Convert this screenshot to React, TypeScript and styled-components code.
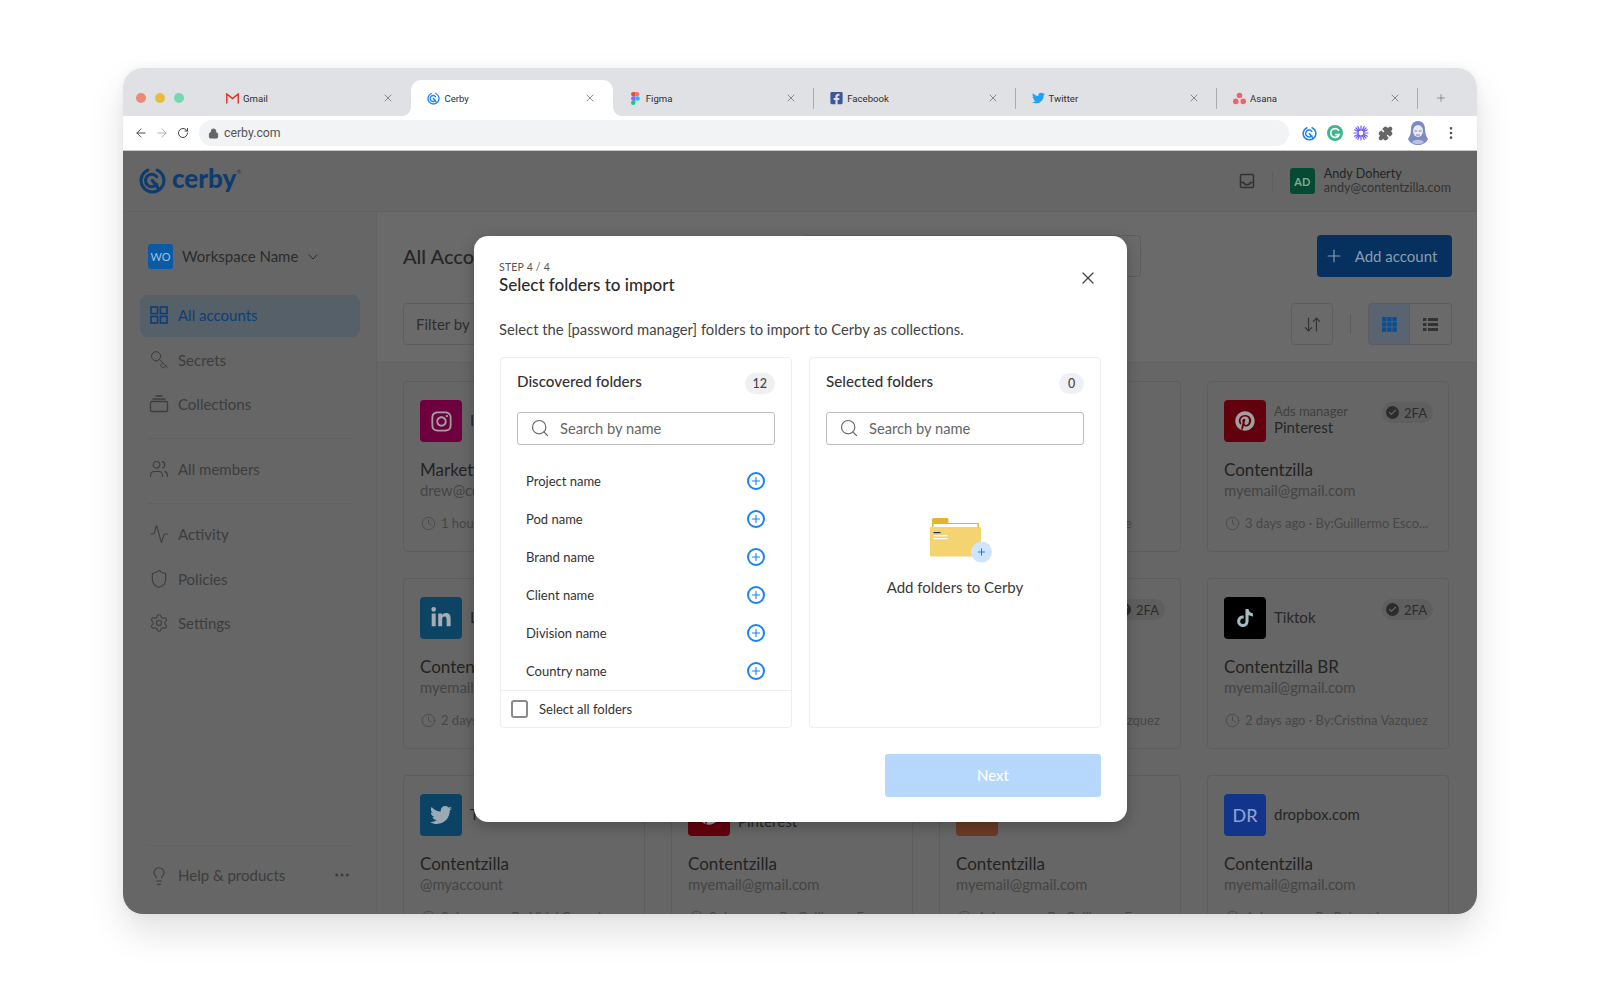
import * as React from 'react';
import styled, { createGlobalStyle } from 'styled-components';
import {
  ArrowDownUp, ArrowLeft, ArrowRight, Activity, Check, ChevronDown, Clock, EllipsisVertical,
  Key, Lightbulb, Lock, MoreHorizontal, Plus, Puzzle, RotateCw, Search, Settings, Shield, Users, X,
} from 'lucide-react';
import { FaFacebookSquare, FaInstagram, FaLinkedinIn, FaPinterest, FaTiktok, FaTwitter } from 'react-icons/fa';

const Global = createGlobalStyle`
  html, body { margin: 0; padding: 0; background: #fff; }
  body { font-family: Lato, "Open Sans", Arial, sans-serif; overflow: hidden; }
  * { box-sizing: border-box; }
`;

const Page = styled.div`
  width: 1600px;
  height: 982px;
  padding: 68px 123px;
  background: #fff;
`;

const Win = styled.div`
  width: 1354px;
  height: 846px;
  border-radius: 20px;
  overflow: hidden;
  display: flex;
  flex-direction: column;
  box-shadow: 0 18px 36px rgba(0, 0, 0, 0.12), 0 0 10px rgba(0, 0, 0, 0.05);
`;

/* browser chrome */
const TabStrip = styled.div`
  height: 48px;
  flex: none;
  background: #dfe1e5;
  display: flex;
  align-items: flex-end;
`;
const Lights = styled.div`
  width: 87px;
  height: 36px;
  padding-left: 12.500px;
  display: flex;
  align-items: center;
  gap: 9px;
`;
const Light = styled.span<{ $c: string }>`
  width: 10px;
  height: 10px;
  border-radius: 50%;
  background: ${p => p.$c};
`;
const Tab = styled.div<{ $active?: boolean; $sep?: boolean }>`
  position: relative;
  width: 201.4px;
  height: 36px;
  padding: 0 16px;
  display: flex;
  align-items: center;
  gap: 4px;
  border-radius: 10px 10px 0 0;
  background: ${p => (p.$active ? '#fff' : 'transparent')};
  color: #2f2f2f;
  font-size: 9.600px;
  font-family: Roboto, sans-serif;
  font-weight: 400;
  ${p => p.$active && `
    &::before, &::after {
      content: '';
      position: absolute;
      bottom: 0;
      width: 10px;
      height: 10px;
    }
    &::before { left: -10px; background: radial-gradient(circle at 0 0, transparent 10px, #fff 10.5px); }
    &::after { right: -10px; background: radial-gradient(circle at 100% 0, transparent 10px, #fff 10.5px); }
  `}
  ${p => p.$sep && `
    &::after {
      content: '';
      position: absolute;
      right: 0;
      top: 8px;
      height: 21px;
      border-right: 1px solid #a9abaf;
    }
  `}
`;
const TabIcon = styled.span`
  width: 13px;
  height: 13px;
  flex: none;
  display: flex;
  align-items: center;
  justify-content: center;
`;
const TabClose = styled.span`
  margin-left: auto;
  margin-right: 1px;
  display: flex;
  color: #555;
`;
const NewTab = styled.div`
  height: 36px;
  width: 46px;
  display: flex;
  align-items: center;
  justify-content: center;
  color: #777;
`;

const Toolbar = styled.div`
  height: 35px;
  flex: none;
  background: #fff;
  border-bottom: 1px solid #c9c9c9;
  display: flex;
  align-items: center;
  padding-left: 11px;
`;
const NavArrows = styled.div`
  width: 65px;
  display: flex;
  gap: 7px;
  color: #444;
`;
const Address = styled.div`
  width: 1090px;
  height: 26px;
  border-radius: 13px;
  background: #f1f3f4;
  display: flex;
  align-items: center;
  gap: 5px;
  padding-left: 9px;
  color: #555;
  font-size: 12.300px;
  font-family: Roboto, sans-serif;
`;
const Extensions = styled.div`
  margin-left: 7px;
  display: grid;
  grid-template-columns: 26px 26px 26px 22px 44px 22px;
  justify-items: center;
  align-items: center;
`;

/* app behind the dialog, painted in its dimmed colours */
const AppArea = styled.div`
  position: relative;
  flex: 1;
  min-height: 0;
  background: #666;
  display: flex;
  flex-direction: column;
  color: #2c2c2c;
`;
const AppHeader = styled.header`
  height: 61px;
  flex: none;
  border-bottom: 1px solid #616161;
  display: flex;
  align-items: center;
  padding: 0 26px 0 16px;
`;
const Logo = styled.div`
  display: flex;
  align-items: center;
  gap: 6px;
  margin-top: -2px;
`;
const LogoWord = styled.span`
  color: #0f3c6c;
  font-size: 26px;
  font-weight: 900;
  line-height: 28px;
  margin-top: -4px;
  position: relative;
  &::after {
    content: '®';
    position: absolute;
    top: 4px;
    right: -5px;
    font-size: 6px;
    font-weight: 400;
    line-height: 8px;
  }
`;
const HeaderRight = styled.div`
  margin-left: auto;
  display: flex;
  align-items: center;
  color: #333;
`;
const HeaderDivider = styled.span`
  width: 1px;
  height: 20px;
  background: #5e5e5e;
  margin: 0 17px 0 17px;
`;
const UserBadge = styled.div`
  width: 25px;
  height: 26px;
  border-radius: 3px;
  background: #064a33;
  color: #87a798;
  font-size: 11px;
  font-weight: 700;
  display: flex;
  align-items: center;
  justify-content: center;
  margin-right: 9px;
`;
const UserName = styled.div`
  font-size: 12.600px;
  line-height: 14px;
  color: #242424;
`;
const UserMail = styled.div`
  font-size: 12.600px;
  line-height: 14px;
  color: #333;
`;

const Body = styled.div`
  flex: 1;
  min-height: 0;
  display: flex;
`;
const Sidebar = styled.aside`
  width: 254px;
  flex: none;
  border-right: 1px solid #616161;
  padding-top: 32px;
  display: flex;
  flex-direction: column;
`;
const Workspace = styled.div`
  display: flex;
  align-items: center;
  margin: 0 25px 26px;
  height: 25px;
  font-size: 15px;
  line-height: 23px;
  color: #2c2c2c;
`;
const WorkspaceBadge = styled.span`
  width: 25px;
  height: 25px;
  border-radius: 3px;
  background: #0a5aa6;
  color: #9cc0e0;
  font-size: 11px;
  display: flex;
  align-items: center;
  justify-content: center;
  margin-right: 9px;
`;
const NavRow = styled.div<{ $active?: boolean }>`
  height: 42px;
  margin: 0 17px 2.5px;
  width: 220px;
  padding: 0 0 2px 9px;
  border-radius: 8px;
  display: flex;
  align-items: center;
  gap: 9px;
  font-size: 15px;
  background: ${p => (p.$active ? '#566069' : 'transparent')};
  color: ${p => (p.$active ? '#0d3f74' : '#3d3d3d')};
`;
const NavRule = styled.div`
  height: 1px;
  background: #616161;
  margin: 9px 25px 10.500px;
`;
const SideFoot = styled.div`
  margin: auto 25px 0;
  height: 69px;
  border-top: 1px solid #616161;
  padding: 20px 0 0 1px;
  display: flex;
  align-items: flex-start;
  gap: 9px;
  font-size: 15px;
  color: #3d3d3d;
`;
const FootMore = styled.span`
  margin-left: auto;
  display: flex;
`;
const Flip = styled.span`
  display: flex;
  transform: rotate(90deg);
`;

const Main = styled.main`
  flex: 1;
  min-width: 0;
  display: flex;
  flex-direction: column;
  overflow: hidden;
`;
const MainTop = styled.div`
  flex: none;
  background: #6a6a6a;
  border-bottom: 1px solid #616161;
  padding: 23px 25px 17px 26px;
`;
const TitleRow = styled.div`
  display: grid;
  grid-template-columns: 400px 338px 1fr;
  height: 42px;
  align-items: center;
  margin-bottom: 26px;
`;
const PageTitle = styled.h1`
  margin: 0;
  font-size: 20px;
  font-weight: 500;
  color: #262626;
`;
const BoxShape = styled.div`
  height: 42px;
  border: 1px solid #5d5d5d;
  border-radius: 4px;
`;
const AddButton = styled.button`
  justify-self: end;
  width: 135px;
  height: 42px;
  border: 0;
  padding: 0 8px 0 0;
  border-radius: 4px;
  background: #06315f;
  color: #8a9db0;
  font: 15px Lato, sans-serif;
  display: flex;
  align-items: center;
  justify-content: center;
  gap: 11px;
`;
const FilterRow = styled.div`
  height: 42px;
  display: flex;
  align-items: center;
`;
const FilterBox = styled(BoxShape)`
  width: 400px;
  padding: 0 12px;
  line-height: 40px;
  font-size: 15px;
  color: #2f2f2f;
`;
const IconBtn = styled.div<{ $on?: boolean; $side?: string }>`
  width: 42px;
  height: 42px;
  border: 1px solid #5d5d5d;
  border-radius: ${p => (p.$side === 'left' ? '4px 0 0 4px' : p.$side === 'right' ? '0 4px 4px 0' : '4px')};
  ${p => p.$side === 'right' && 'border-left: 0;'}
  background: ${p => (p.$on ? '#5a6470' : 'transparent')};
  display: flex;
  align-items: center;
  justify-content: center;
  color: #333;
`;
const RightTools = styled.div`
  margin-left: auto;
  display: flex;
  align-items: center;
`;
const ToolRule = styled.span`
  width: 1px;
  height: 20px;
  background: #5d5d5d;
  margin: 0 17px 0 17px;
`;

const CardGrid = styled.div`
  flex: 1;
  padding: 18px 0 0 26px;
  display: grid;
  grid-template-columns: repeat(4, 242px);
  grid-auto-rows: 171px;
  column-gap: 26px;
  row-gap: 26px;
`;
const Card = styled.article`
  border: 1px solid #5d5d5d;
  border-radius: 4px;
  padding: 18px 16px 0;
`;
const CardHead = styled.div`
  display: flex;
  align-items: center;
  height: 42px;
`;
const Tile = styled.div<{ $bg: string; $fg: string }>`
  width: 42px;
  height: 42px;
  flex: none;
  border-radius: 4px;
  background: ${p => p.$bg};
  color: ${p => p.$fg};
  display: flex;
  align-items: center;
  justify-content: center;
  font-size: 18px;
  font-weight: 500;
  margin-right: 8px;
`;
const ServiceWrap = styled.div`
  min-width: 0;
  padding-bottom: 2px;
`;
const ServiceKind = styled.div`
  font-size: 13px;
  line-height: 15px;
  color: #404040;
`;
const ServiceName = styled.div`
  font-size: 15px;
  line-height: 17px;
  color: #262626;
`;
const TwoFA = styled.div`
  margin-left: auto;
  margin-top: -17px;
  margin-right: -1px;
  width: 51px;
  height: 21px;
  flex: none;
  border-radius: 11px;
  background: #5f5f5f;
  display: flex;
  align-items: center;
  gap: 5px;
  padding-left: 4px;
  font-size: 13px;
  color: #2c2c2c;
`;
const TwoFADot = styled.span`
  width: 13px;
  height: 13px;
  border-radius: 50%;
  background: #2c2c2c;
  color: #666;
  display: flex;
  align-items: center;
  justify-content: center;
`;
const CardName = styled.div`
  margin-top: 18px;
  font-size: 17px;
  line-height: 20px;
  color: #232323;
  white-space: nowrap;
`;
const CardMail = styled.div`
  font-size: 14.800px;
  line-height: 20px;
  color: #444;
`;
const CardMeta = styled.div`
  margin-top: 13px;
  padding-left: 1px;
  height: 20px;
  display: flex;
  align-items: center;
  gap: 5px;
  font-size: 13px;
  color: #464646;
  white-space: nowrap;
  overflow: hidden;
`;

/* dialog */
const Modal = styled.section`
  position: absolute;
  left: 351px;
  top: 85px;
  width: 653px;
  height: 586px;
  background: #fff;
  border-radius: 14px;
  padding: 24px 26px 25px 25px;
  box-shadow: 0 4px 14px rgba(0, 0, 0, 0.25);
  display: flex;
  flex-direction: column;
  color: #2d2d2d;
`;
const CloseBtn = styled.button`
  position: absolute;
  right: 28px;
  top: 31px;
  width: 22px;
  height: 22px;
  padding: 0;
  border: 0;
  background: none;
  color: #444;
  display: flex;
  align-items: center;
  justify-content: center;
`;
const Step = styled.div`
  font-size: 10.500px;
  line-height: 14px;
  color: #555;
  letter-spacing: 0.2px;
`;
const ModalTitle = styled.h2`
  margin: 1px 0 0;
  font-size: 17px;
  line-height: 20px;
  font-weight: 500;
  color: #2a2a2a;
`;
const Lead = styled.p`
  margin: 24px 0 18px;
  font-size: 14.800px;
  line-height: 20px;
  color: #444;
`;
const Panels = styled.div`
  height: 371px;
  flex: none;
  margin-left: 1px;
  display: grid;
  grid-template-columns: 1fr 1fr;
  gap: 17px;
`;
const Panel = styled.div`
  border: 1px solid #eceef0;
  border-radius: 4px;
  display: flex;
  flex-direction: column;
  min-width: 0;
`;
const PanelHead = styled.div`
  height: 54px;
  padding: 13px 16px 0;
  display: flex;
  align-items: flex-start;
  justify-content: space-between;
  font-size: 15.200px;
  line-height: 20px;
  font-weight: 500;
  color: #333;
`;
const Count = styled.span`
  min-width: 25px;
  height: 21px;
  margin-top: 2px;
  padding: 0 8px;
  border-radius: 11px;
  background: #eef0f3;
  font-size: 12.500px;
  line-height: 21px;
  text-align: center;
  color: #444;
`;
const SearchBox = styled.div`
  height: 33px;
  margin: 0 16px;
  border: 1px solid #bdbdbd;
  border-radius: 3px;
  padding: 0 0 2px 12px;
  display: flex;
  align-items: center;
  gap: 10px;
  color: #666;
  font-size: 14.700px;
`;
const FolderList = styled.div`
  margin-top: 17px;
  flex: 1;
`;
const FolderRow = styled.div`
  height: 38px;
  padding: 0 26px 0 25px;
  display: flex;
  align-items: center;
  justify-content: space-between;
  font-size: 13px;
  color: #333;
`;
const PlusRound = styled.span`
  width: 18px;
  height: 18px;
  border: 2px solid #1a82f5;
  border-radius: 50%;
  color: #1a82f5;
  display: flex;
  align-items: center;
  justify-content: center;
`;
const PanelFoot = styled.label`
  height: 37px;
  flex: none;
  border-top: 1px solid #eceef0;
  padding-left: 10px;
  display: flex;
  align-items: center;
  gap: 11px;
  font-size: 13px;
  color: #333;
`;
const CheckBox = styled.span`
  width: 17px;
  height: 18px;
  border: 2px solid #8a8a8a;
  border-radius: 3px;
`;
const Empty = styled.div`
  margin-top: 73px;
  display: flex;
  flex-direction: column;
  align-items: center;
  gap: 13px;
  font-size: 15px;
  line-height: 20px;
  color: #3a3a3a;
`;
const ModalFoot = styled.div`
  margin-top: 26px;
  display: flex;
  justify-content: flex-end;
`;
const NextBtn = styled.button`
  width: 216px;
  height: 43px;
  border: 0;
  padding: 0 0 2px;
  border-radius: 3px;
  background: #b7d8fd;
  color: #fff;
  font: 15px Lato, sans-serif;
`;

function CerbyMark({ size, color, weight = 2.6 }: { size: number; color: string; weight?: number }) {
  return (
    <svg width={size} height={size} viewBox="0 0 26 26" fill="none" stroke={color} strokeWidth={weight} strokeLinecap="round">
      <path d="M8.5 3a11 11 0 1 0 9 0" />
      <path d="M17 9.3a6 6 0 1 0 0 7.4" />
      <path d="M12.8 13l5.4 7" />
    </svg>
  );
}

function GmailIcon() {
  return (
    <svg width="13" height="11" viewBox="0 0 13 11" fill="none">
      <path d="M.8 10.5V1l5.7 4.6L12.2 1v9.5" stroke="#e8291c" strokeWidth="1.4" />
    </svg>
  );
}

function FigmaIcon() {
  return (
    <svg width="9" height="13" viewBox="0 0 9 13">
      <path d="M0 2.2A2.2 2.2 0 0 1 2.2 0h2.2v4.3H2.2A2.2 2.2 0 0 1 0 2.2z" fill="#f24e1e" />
      <path d="M4.4 0h2.2a2.2 2.2 0 0 1 0 4.3H4.4z" fill="#ff7262" />
      <path d="M0 6.5a2.2 2.2 0 0 1 2.2-2.2h2.2v4.4H2.2A2.2 2.2 0 0 1 0 6.5z" fill="#a259ff" />
      <circle cx="6.6" cy="6.5" r="2.2" fill="#1abcfe" />
      <path d="M0 10.8a2.2 2.2 0 0 1 2.2-2.2h2.2v2.2a2.2 2.2 0 0 1-4.4 0z" fill="#0acf83" />
    </svg>
  );
}

function AsanaIcon() {
  return (
    <svg width="14" height="13" viewBox="0 0 14 13" fill="#f0626a">
      <circle cx="7" cy="3.2" r="3" />
      <circle cx="3" cy="9.6" r="3" />
      <circle cx="11" cy="9.6" r="3" />
    </svg>
  );
}

function SnowIcon() {
  return (
    <svg width="16" height="16" viewBox="0 0 16 16" stroke="#6a5cf5" strokeWidth="1.2" strokeLinecap="round">
      <path d="M8 1v14M1 8h14M3 3l10 10M13 3L3 13M4.8 1.6l6.4 12.8M11.2 1.6L4.8 14.4M1.600 4.800l12.800 6.400M1.600 11.200l12.800-6.400" />
      <circle cx="8" cy="8" r="3" fill="#fff" />
    </svg>
  );
}

function GrammarlyIcon() {
  return (
    <svg width="16" height="16" viewBox="0 0 16 16" fill="none">
      <circle cx="8" cy="8" r="8" fill="#3fb68b" />
      <path d="M11.5 5.2A4.4 4.4 0 1 0 12.2 9.6H8.8" stroke="#fff" strokeWidth="1.6" strokeLinecap="round" />
    </svg>
  );
}

function ProfileIcon() {
  return (
    <svg width="22" height="26" viewBox="0 0 22 26">
      <path d="M11 1c5 0 7 4 7 8 0 4 1 7 3 10-2 4-6 6-10 6S3 23 1 19c2-3 3-6 3-10 0-4 2-8 7-8z" fill="#7d8ac4" />
      <ellipse cx="11" cy="11" rx="5" ry="6" fill="#e8ebf5" />
      <path d="M5 22c3-3 9-3 12 0-3 3-9 3-12 0z" fill="#b9c1e3" />
      <path d="M7.5 11h2.6M11.9 11h2.6M9 15h4" stroke="#555" strokeWidth=".7" />
    </svg>
  );
}

function TrayIcon() {
  return (
    <svg width="16" height="16" viewBox="0 0 16 16" fill="none" stroke="#333" strokeWidth="1.5">
      <rect x="1.500" y="1.500" width="13" height="13" rx="1" />
      <path d="M1.500 9.500h3.300c.4 1.500 1.700 2.300 3.200 2.300s2.800-.8 3.200-2.300h3.300" />
    </svg>
  );
}

function GridNavIcon({ color }: { color: string }) {
  return (
    <svg width="20" height="20" viewBox="0 0 20 20" fill="none" stroke={color} strokeWidth="1.6">
      <rect x="2" y="2" width="6.6" height="6.6" />
      <rect x="11.4" y="2" width="6.6" height="6.6" />
      <rect x="2" y="11.4" width="6.6" height="6.6" />
      <rect x="11.4" y="11.4" width="6.6" height="6.6" />
    </svg>
  );
}

function StackIcon() {
  return (
    <svg width="20" height="20" viewBox="0 0 20 20" fill="none" stroke="#3d3d3d" strokeWidth="1.3">
      <rect x="1.5" y="7.5" width="17" height="10" rx="1" />
      <path d="M3.5 5h13M6.5 2h7" />
    </svg>
  );
}

function DotsGrid() {
  const cells = [0, 1, 2].flatMap(r => [0, 1, 2].map(c => ({ r, c })));
  return (
    <svg width="15" height="15" viewBox="0 0 15 15" fill="#0b4f93">
      {cells.map(({ r, c }) => <rect key={`${r}${c}`} x={c * 5.2} y={r * 5.2} width="4.4" height="4.4" />)}
    </svg>
  );
}

function ListLines() {
  return (
    <svg width="15" height="15" viewBox="0 0 15 15" fill="#333">
      {[1, 6, 11].map(y => (
        <g key={y}>
          <rect x="0" y={y} width="3.4" height="3" />
          <rect x="5" y={y} width="10" height="3" />
        </g>
      ))}
    </svg>
  );
}

function FolderArt() {
  return (
    <svg width="64" height="46" viewBox="0 0 64 46" style={{ marginLeft: 13 }}>
      <path d="M2 1.5A1.5 1.5 0 0 1 3.500 0H17a1.500 1.500 0 0 1 1.500 1.500V5H48a1 1 0 0 1 1 1v8H2z" fill="#e3b52c" />
      <rect x="3.500" y="6" width="44" height="6" fill="#fff" />
      <rect x="0" y="9" width="51" height="29.500" rx="1" fill="#f6d371" />
      <rect x="3.500" y="14" width="7" height="1.200" fill="#1c2a6b" />
      <rect x="3.500" y="17" width="14" height="1.300" fill="#fff" />
      <rect x="3.500" y="20" width="14" height="1.300" fill="#fff" />
      <circle cx="51.500" cy="34" r="10.500" fill="#cfe4fd" />
      <path d="M51.500 30.500v7M48 34h7" stroke="#1a82f5" strokeWidth="1.100" />
    </svg>
  );
}

const tabs = [
  { key: 'Gmail', icon: <GmailIcon /> },
  { key: 'Cerby', icon: <CerbyMark size={13} color="#1a82f5" />, active: true },
  { key: 'Figma', icon: <FigmaIcon />, sep: true },
  { key: 'Facebook', icon: <FaFacebookSquare size={14} color="#3b5998" />, sep: true },
  { key: 'Twitter', icon: <FaTwitter size={14} color="#1da1f2" />, sep: true },
  { key: 'Asana', icon: <AsanaIcon />, sep: true },
];

type Account = {
  tile?: React.ReactNode;
  bg?: string;
  fg?: string;
  kind?: string;
  service?: string;
  name?: string;
  mail?: string;
  meta?: string;
  tfa?: boolean;
};

// col 2 of the first two rows sits wholly under the dialog, so those cards stay empty
const accounts: Account[] = [
  { tile: <FaInstagram size={23} />, bg: '#6e0040', fg: '#a0a0a0', service: 'Instagram', name: 'Marketing', mail: 'drew@contentzilla.com', meta: '1 hour ago · By:Drew' },
  {},
  { meta: '2 days ago · By:Felipe Pepe' },
  { tile: <FaPinterest size={20} />, bg: '#63000d', fg: '#a0a0a0', kind: 'Ads manager', service: 'Pinterest', name: 'Contentzilla', mail: 'myemail@gmail.com', meta: '3 days ago · By:Guillermo Esco...', tfa: true },
  { tile: <FaLinkedinIn size={22} />, bg: '#0e4463', fg: '#a4adb3', service: 'Linkedin', name: 'Contentzilla', mail: 'myemail@gmail.com', meta: '2 days ago' },
  {},
  { meta: '2 days ago · By:Cristina Vazquez', tfa: true },
  { tile: <FaTiktok size={18} />, bg: '#000', fg: '#a3bcc0', service: 'Tiktok', name: 'Contentzilla BR', mail: 'myemail@gmail.com', meta: '2 days ago · By:Cristina Vazquez', tfa: true },
  { tile: <FaTwitter size={22} />, bg: '#0c4263', fg: '#9aa9b3', service: 'Twitter', name: 'Contentzilla', mail: '@myaccount', meta: '2 days ago · By:Vidal Gonzalez' },
  { tile: <FaPinterest size={20} />, bg: '#63000d', fg: '#a0a0a0', kind: 'Ads manager', service: 'Pinterest', name: 'Contentzilla', mail: 'myemail@gmail.com', meta: '2 days ago · By:Guillermo E...' },
  { tile: 'A', bg: '#6b3a26', fg: '#a0a0a0', service: 'Amazon', name: 'Contentzilla', mail: 'myemail@gmail.com', meta: '4 days ago · By:Guillermo E...' },
  { tile: 'DR', bg: '#12348a', fg: '#8d9fcf', service: 'dropbox.com', name: 'Contentzilla', mail: 'myemail@gmail.com', meta: '4 days ago · By:Robert Lee' },
];

const folders = ['Project name', 'Pod name', 'Brand name', 'Client name', 'Division name', 'Country name'];

export default function App() {
  return (
    <Page>
      <Global />
      <Win>
        <TabStrip>
          <Lights>
            <Light $c="#ee8878" />
            <Light $c="#e9bd3c" />
            <Light $c="#76d7b2" />
          </Lights>
          {tabs.map(t => (
            <Tab key={t.key} $active={t.active} $sep={t.sep}>
              <TabIcon>{t.icon}</TabIcon>
              {t.key}
              <TabClose><X size={12} strokeWidth={1.3} /></TabClose>
            </Tab>
          ))}
          <NewTab><Plus size={12} strokeWidth={1.5} /></NewTab>
        </TabStrip>

        <Toolbar>
          <NavArrows>
            <ArrowLeft size={14} strokeWidth={1.6} />
            <ArrowRight size={14} strokeWidth={1.6} color="#aaa" />
            <RotateCw size={12} strokeWidth={2} style={{ marginTop: 1, marginLeft: 1 }} />
          </NavArrows>
          <Address>
            <Lock size={11} fill="#666" color="#666" />
            cerby.com
          </Address>
          <Extensions>
            <CerbyMark size={15} color="#1a82f5" />
            <GrammarlyIcon />
            <SnowIcon />
            <Puzzle size={15} fill="#666" color="#666" />
            <ProfileIcon />
            <EllipsisVertical size={16} color="#555" />
          </Extensions>
        </Toolbar>

        <AppArea>
          <AppHeader>
            <Logo>
              <CerbyMark size={27} color="#0f3c6c" weight={3} />
              <LogoWord>cerby</LogoWord>
            </Logo>
            <HeaderRight>
              <TrayIcon />
              <HeaderDivider />
              <UserBadge>AD</UserBadge>
              <div>
                <UserName>Andy Doherty</UserName>
                <UserMail>andy@contentzilla.com</UserMail>
              </div>
            </HeaderRight>
          </AppHeader>

          <Body>
            <Sidebar>
              <Workspace>
                <WorkspaceBadge>WO</WorkspaceBadge>
                Workspace Name
                <ChevronDown size={16} strokeWidth={1.5} style={{ marginLeft: 7 }} />
              </Workspace>
              <NavRow $active><GridNavIcon color="#0d3f74" />All accounts</NavRow>
              <NavRow><Flip><Key size={20} strokeWidth={1.2} /></Flip>Secrets</NavRow>
              <NavRow><StackIcon />Collections</NavRow>
              <NavRule />
              <NavRow><Users size={20} strokeWidth={1.3} />All members</NavRow>
              <NavRule />
              <NavRow><Activity size={20} strokeWidth={1.3} />Activity</NavRow>
              <NavRow><Shield size={20} strokeWidth={1.3} />Policies</NavRow>
              <NavRow><Settings size={20} strokeWidth={1.3} />Settings</NavRow>
              <SideFoot>
                <Lightbulb size={20} strokeWidth={1.3} />
                Help &amp; products
                <FootMore><MoreHorizontal size={18} /></FootMore>
              </SideFoot>
            </Sidebar>

            <Main>
              <MainTop>
                <TitleRow>
                  <PageTitle>All Accounts</PageTitle>
                  <BoxShape />
                  <AddButton><Plus size={20} strokeWidth={1.4} />Add account</AddButton>
                </TitleRow>
                <FilterRow>
                  <FilterBox>Filter by</FilterBox>
                  <RightTools>
                    <IconBtn><ArrowDownUp size={19} strokeWidth={1.5} /></IconBtn>
                    <ToolRule />
                    <IconBtn $on $side="left"><DotsGrid /></IconBtn>
                    <IconBtn $side="right"><ListLines /></IconBtn>
                  </RightTools>
                </FilterRow>
              </MainTop>
              <CardGrid>
                {accounts.map((a, i) => (
                  <Card key={i}>
                    <CardHead>
                      {a.tile && <Tile $bg={a.bg ?? '#666'} $fg={a.fg ?? '#aaa'}>{a.tile}</Tile>}
                      <ServiceWrap>
                        {a.kind && <ServiceKind>{a.kind}</ServiceKind>}
                        {a.service && <ServiceName>{a.service}</ServiceName>}
                      </ServiceWrap>
                      {a.tfa && (
                        <TwoFA>
                          <TwoFADot><Check size={9} strokeWidth={3} /></TwoFADot>
                          2FA
                        </TwoFA>
                      )}
                    </CardHead>
                    {a.meta && (
                      <>
                        <CardName>{a.name ?? '\u00a0'}</CardName>
                        <CardMail>{a.mail ?? '\u00a0'}</CardMail>
                        <CardMeta><Clock size={15} strokeWidth={1.3} style={{ flex: 'none' }} />{a.meta}</CardMeta>
                      </>
                    )}
                  </Card>
                ))}
              </CardGrid>
            </Main>
          </Body>

          <Modal>
            <CloseBtn aria-label="Close"><X size={20} strokeWidth={1.5} /></CloseBtn>
            <Step>STEP 4 / 4</Step>
            <ModalTitle>Select folders to import</ModalTitle>
            <Lead>Select the [password manager] folders to import to Cerby as collections.</Lead>
            <Panels>
              <Panel>
                <PanelHead>Discovered folders<Count>12</Count></PanelHead>
                <SearchBox><Search size={20} strokeWidth={1.4} />Search by name</SearchBox>
                <FolderList>
                  {folders.map(f => (
                    <FolderRow key={f}>
                      {f}
                      <PlusRound><Plus size={12} strokeWidth={2.2} /></PlusRound>
                    </FolderRow>
                  ))}
                </FolderList>
                <PanelFoot><CheckBox />Select all folders</PanelFoot>
              </Panel>
              <Panel>
                <PanelHead>Selected folders<Count>0</Count></PanelHead>
                <SearchBox><Search size={20} strokeWidth={1.4} />Search by name</SearchBox>
                <Empty>
                  <FolderArt />
                  Add folders to Cerby
                </Empty>
              </Panel>
            </Panels>
            <ModalFoot><NextBtn>Next</NextBtn></ModalFoot>
          </Modal>
        </AppArea>
      </Win>
    </Page>
  );
}
